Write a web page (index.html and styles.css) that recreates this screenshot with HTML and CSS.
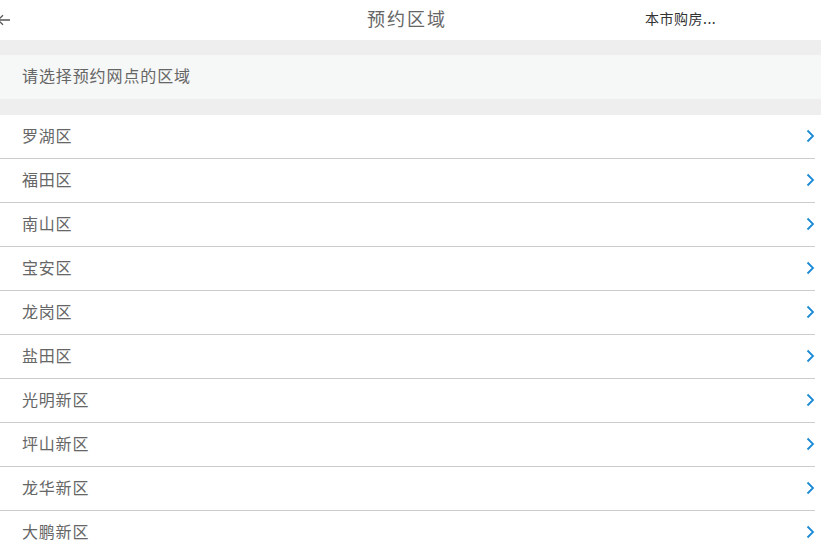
FILE: index.html
```html
<!DOCTYPE html>
<html lang="zh">
<head>
<meta charset="utf-8">
<link rel="stylesheet" href="styles.css">
</head>
<body>
<div class="page">
  <header class="topbar">
    <span class="back">
      <svg width="13" height="12" viewBox="0 0 13 12"><path d="M6 1.2 L1.2 6 L6 10.8 M1.2 6 H13" fill="none" stroke="#555" stroke-width="1.3"/></svg>
    </span>
    <span class="title">预约区域</span>
    <span class="right">本市购房...</span>
  </header>
  <div class="gap"></div>
  <div class="hint">请选择预约网点的区域</div>
  <div class="gap gap2"></div>
  <ul class="list">
    <li class="row"><span>罗湖区</span><svg class="chev" width="9" height="14" viewBox="0 0 9 14"><path d="M1.5 1.5 L7 7 L1.5 12.5" fill="none" stroke="#1a8ad6" stroke-width="1.8"/></svg></li>
    <li class="row"><span>福田区</span><svg class="chev" width="9" height="14" viewBox="0 0 9 14"><path d="M1.5 1.5 L7 7 L1.5 12.5" fill="none" stroke="#1a8ad6" stroke-width="1.8"/></svg></li>
    <li class="row"><span>南山区</span><svg class="chev" width="9" height="14" viewBox="0 0 9 14"><path d="M1.5 1.5 L7 7 L1.5 12.5" fill="none" stroke="#1a8ad6" stroke-width="1.8"/></svg></li>
    <li class="row"><span>宝安区</span><svg class="chev" width="9" height="14" viewBox="0 0 9 14"><path d="M1.5 1.5 L7 7 L1.5 12.5" fill="none" stroke="#1a8ad6" stroke-width="1.8"/></svg></li>
    <li class="row"><span>龙岗区</span><svg class="chev" width="9" height="14" viewBox="0 0 9 14"><path d="M1.5 1.5 L7 7 L1.5 12.5" fill="none" stroke="#1a8ad6" stroke-width="1.8"/></svg></li>
    <li class="row"><span>盐田区</span><svg class="chev" width="9" height="14" viewBox="0 0 9 14"><path d="M1.5 1.5 L7 7 L1.5 12.5" fill="none" stroke="#1a8ad6" stroke-width="1.8"/></svg></li>
    <li class="row"><span>光明新区</span><svg class="chev" width="9" height="14" viewBox="0 0 9 14"><path d="M1.5 1.5 L7 7 L1.5 12.5" fill="none" stroke="#1a8ad6" stroke-width="1.8"/></svg></li>
    <li class="row"><span>坪山新区</span><svg class="chev" width="9" height="14" viewBox="0 0 9 14"><path d="M1.5 1.5 L7 7 L1.5 12.5" fill="none" stroke="#1a8ad6" stroke-width="1.8"/></svg></li>
    <li class="row"><span>龙华新区</span><svg class="chev" width="9" height="14" viewBox="0 0 9 14"><path d="M1.5 1.5 L7 7 L1.5 12.5" fill="none" stroke="#1a8ad6" stroke-width="1.8"/></svg></li>
    <li class="row last"><span>大鹏新区</span><svg class="chev" width="9" height="14" viewBox="0 0 9 14"><path d="M1.5 1.5 L7 7 L1.5 12.5" fill="none" stroke="#1a8ad6" stroke-width="1.8"/></svg></li>
  </ul>
</div>
</body>
</html>
```
FILE: styles.css
```css
* { box-sizing: border-box; }
html, body { margin: 0; padding: 0; background: #fff; }
body {
  font-family: "Noto Sans CJK SC", "Noto Sans", "Liberation Sans", sans-serif;
  color: #666;
  overflow: hidden;
}
.page { width: 821px; height: 551px; overflow: hidden; }
.topbar {
  height: 40px;
  display: grid;
  grid-template-columns: 1fr auto 1fr;
  align-items: center;
  background: #fff;
}
.back { display: flex; align-items: center; margin-left: -3px; margin-top: -1px; }
.title {
  font-size: 18px;
  letter-spacing: 2px;
  color: #666;
  margin-top: -5px;
  padding-right: 7px;
}
.right {
  font-size: 14px;
  letter-spacing: 0.5px;
  color: #333;
  margin-top: -5px;
  padding-left: 191px;
  white-space: nowrap;
}
.gap { height: 15px; background: #eee; }
.gap2 { height: 16px; }
.hint {
  height: 44px;
  background: #f6f7f7;
  display: flex;
  align-items: center;
  padding-left: 22px;
  padding-bottom: 5px;
  font-size: 16px;
  letter-spacing: 0.9px;
  color: #666;
}
.list { list-style: none; margin: 0; padding: 0; }
.row {
  height: 44px;
  display: flex;
  align-items: center;
  justify-content: space-between;
  padding-left: 22px;
  padding-right: 6px;
  font-size: 16px;
  letter-spacing: 0.8px;
  color: #666;
  position: relative;
}
.row span { margin-top: -4px; }
.row::after {
  content: "";
  position: absolute;
  left: 0;
  right: 6px;
  bottom: 0;
  height: 1px;
  background: #ccc;
}
.row.last::after { display: none; }
.chev { display: block; margin-top: -2px; }
```
